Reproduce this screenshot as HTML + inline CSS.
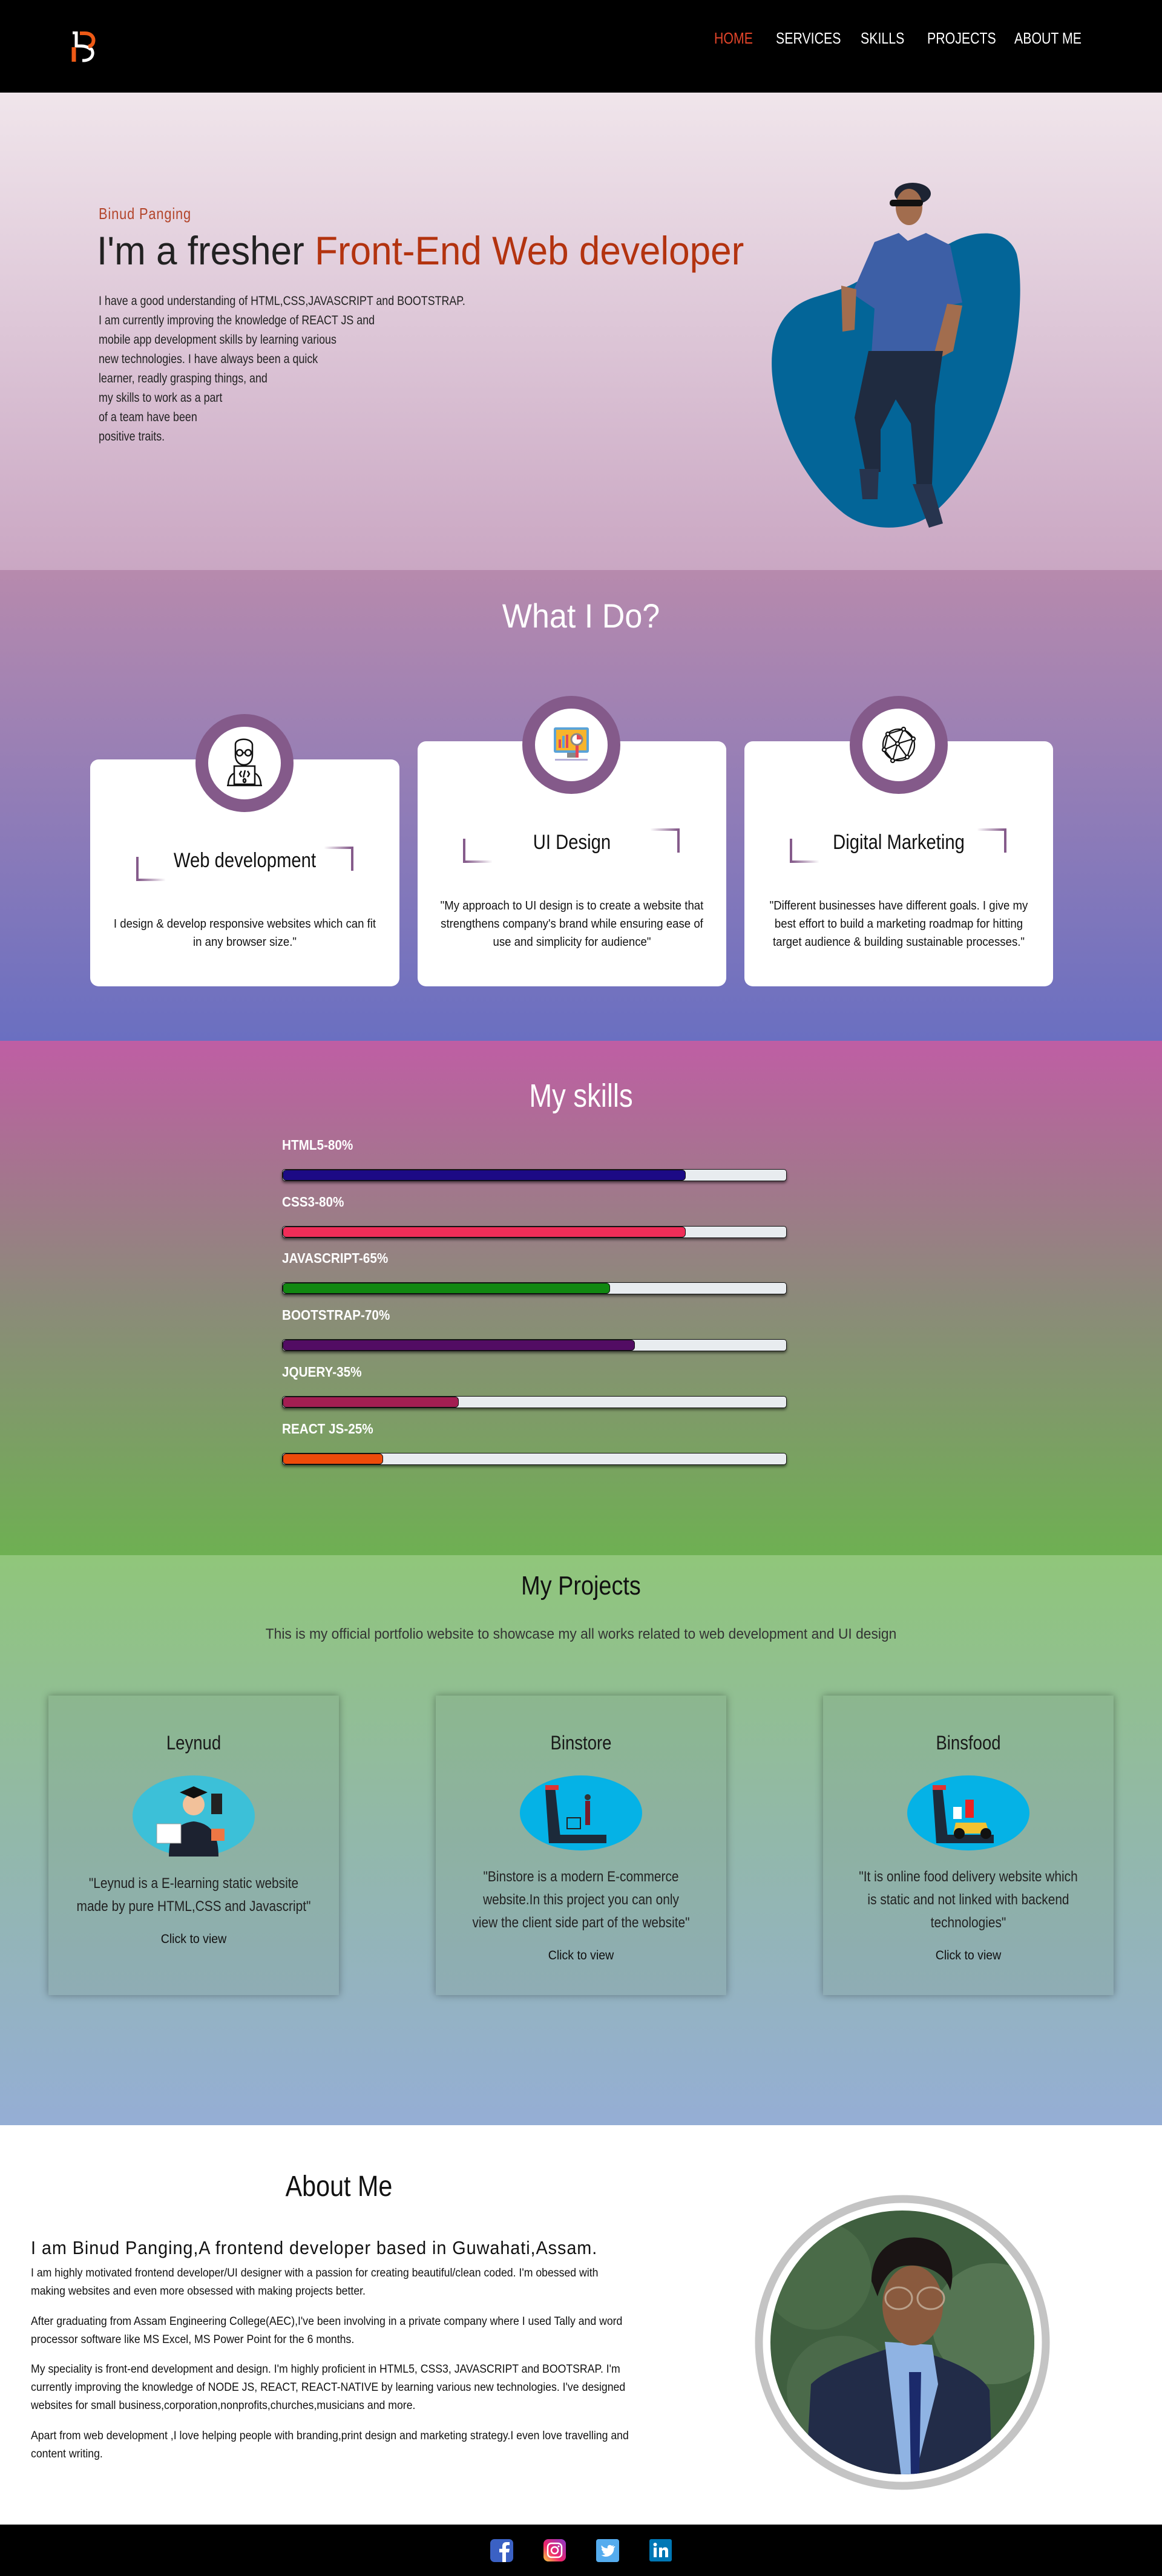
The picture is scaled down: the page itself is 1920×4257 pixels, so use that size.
<!DOCTYPE html>
<html><head><meta charset="utf-8">
<style>
*{margin:0;padding:0;box-sizing:border-box}
html,body{width:1920px;height:4257px;overflow:hidden}
body{position:relative;font-family:"Liberation Sans",sans-serif;color:#111}
.abs{position:absolute}
.n{transform:scaleX(.93);transform-origin:left top;white-space:nowrap}
.nc{transform:scaleX(.93);transform-origin:center top;white-space:nowrap}
.nav{left:0;top:0;width:1920px;height:153px;background:#000}
.nav a{position:absolute;top:48px;color:#fff;font-size:26px;text-decoration:none;white-space:nowrap;transform:scaleX(.82);transform-origin:left top}
.hero{left:0;top:153px;width:1920px;height:789px;background:linear-gradient(#f0e5eb,#caa7c3)}
.what{left:0;top:942px;width:1920px;height:778px;background:linear-gradient(#b78aad,#6a6fc1)}
.skills{left:0;top:1720px;width:1920px;height:850px;background:linear-gradient(#bf5ea4,#8c8a7a 50%,#6eb052)}
.proj{left:0;top:2570px;width:1920px;height:942px;background:linear-gradient(#90c67a,#92b9a6 45%,#95aed5)}
.about{left:0;top:3512px;width:1920px;height:660px;background:#fff}
.foot{left:0;top:4172px;width:1920px;height:85px;background:#000}
.card{background:#fff;border-radius:14px}
.circ{width:162px;height:162px;border-radius:50%;background:#fff;border:21px solid #845a8a;display:flex;align-items:center;justify-content:center}
.ctitle{font-size:34px;color:#111;text-align:center}
.cdesc{font-size:20px;line-height:30px;text-align:center;color:#111}
.brk{position:absolute;width:48px;height:40px}
.bl{border-left:4px solid #845a8a;border-bottom:4px solid #845a8a;border-image:linear-gradient(to right,#845a8a,#fff) 1}
.br{border-right:4px solid #845a8a;border-top:4px solid #845a8a;border-image:linear-gradient(to left,#845a8a,#fff) 1}
.lbl{left:466px;color:#fff;font-weight:bold;font-size:23px;transform:scaleX(.9);transform-origin:left top;white-space:nowrap}
.bar{left:466px;width:834px;height:20px;background:#e8ecef;border:1px solid #111;border-radius:5px;box-shadow:0 3px 4px rgba(0,0,0,.5);overflow:hidden}
.bar i{display:block;height:100%;border-radius:6px;border:1px solid #111}
.pc{width:480px;height:495px;background:rgba(120,150,130,.18);box-shadow:0 0 12px rgba(0,0,0,.35)}
.pt{font-size:32px;text-align:center;color:#1a1a1a}
.pd{font-size:24px;line-height:38px;text-align:center;color:#222;transform:scaleX(.87);transform-origin:center top;white-space:nowrap}
.pv{font-size:21px;text-align:center;color:#111}
.ap{left:51px;font-size:19px;line-height:30px;color:#111}
</style></head><body>

<div class="abs nav">
 <svg class="abs" style="left:116px;top:52px" width="50" height="52" viewBox="0 0 50 52">
  <path d="M4 2 h6 v22 h8 c6 0 12 2 16 6" fill="none" stroke="#fff" stroke-width="5"/>
  <path d="M6 26 v24" stroke="#ee5a16" stroke-width="7"/>
  <path d="M16 3 h8 c12 0 16 8 14 15 c-1 4-4 6-8 7" fill="none" stroke="#ee5a16" stroke-width="6"/>
  <path d="M34 28 c6 6 4 18-10 20 h-4" fill="none" stroke="#fff" stroke-width="5"/>
 </svg>
 <a style="left:1180px;color:#e3452a">HOME</a>
 <a style="left:1282px">SERVICES</a>
 <a style="left:1422px">SKILLS</a>
 <a style="left:1532px">PROJECTS</a>
 <a style="left:1676px">ABOUT ME</a>
</div>

<div class="abs hero"></div>
<div class="abs n" style="left:163px;top:338px;font-size:26px;color:#b3452b;letter-spacing:1px;transform:scaleX(.84)">Binud Panging</div>
<div class="abs n" style="left:160px;top:376px;font-size:66px;color:#222;transform:scaleX(.94)">I'm a fresher <span style="color:#b3330f">Front-End Web developer</span></div>
<div class="abs n" style="left:163px;top:482px;font-size:21px;line-height:32px;color:#222;transform:scaleX(.85)">I have a good understanding of HTML,CSS,JAVASCRIPT and BOOTSTRAP.<br>I am currently improving the knowledge of REACT JS and<br>mobile app development skills by learning various<br>new technologies. I have always been a quick<br>learner, readly grasping things, and<br>my skills to work as a part<br>of a team have been<br>positive traits.</div>

<svg class="abs" style="left:1240px;top:280px" width="480" height="620" viewBox="0 0 480 620">
 <path d="M330 122 C370 100 425 95 440 140 C452 190 444 280 425 350 C400 440 360 520 300 570 C260 600 190 600 150 565 C90 515 45 430 36 340 C30 270 55 225 110 210 C150 198 165 195 200 170 C250 150 290 140 330 122 Z" fill="#036598"/>
 <ellipse cx="268" cy="40" rx="30" ry="18" fill="#1d2433"/>
 <ellipse cx="262" cy="62" rx="22" ry="30" fill="#a26d4e"/>
 <rect x="230" y="50" width="55" height="11" rx="5" fill="#111"/>
 <path d="M205 120 L245 105 L260 118 L290 105 L330 125 L350 220 L325 225 L318 305 L200 305 L205 230 L168 205 Z" fill="#3d5fa6"/>
 <path d="M150 192 L175 198 L172 265 L152 268 Z" fill="#a26d4e"/>
 <path d="M325 222 L350 225 L335 300 L300 318 Z" fill="#a26d4e"/>
 <path d="M195 300 L318 300 L305 390 L300 520 L275 530 L265 420 L240 380 L215 430 L215 500 L190 500 L172 410 Z" fill="#1f2b40"/>
 <path d="M180 495 L212 495 L210 545 L185 545 Z" fill="#27344e"/>
 <path d="M268 520 L300 520 L318 585 L295 592 Z" fill="#27344e"/>
</svg>

<div class="abs what"></div>
<div class="abs nc" style="left:0;width:1920px;top:985px;text-align:center;font-size:56px;color:#fff">What I Do?</div>

<div class="abs card" style="left:149px;top:1255px;width:511px;height:375px"></div>
<div class="abs card" style="left:690px;top:1225px;width:510px;height:405px"></div>
<div class="abs card" style="left:1230px;top:1225px;width:510px;height:405px"></div>

<div class="abs circ" style="left:323px;top:1180px">
 <svg width="70" height="90" viewBox="0 0 70 90" fill="none" stroke="#111" stroke-width="2.5">
  <path d="M20 14 c0-10 25-12 28 0 v18 c0 10-6 16-14 16 c-8 0-14-6-14-16 Z"/>
  <circle cx="27" cy="28" r="5"/><circle cx="41" cy="28" r="5"/><path d="M32 28h4"/>
  <path d="M18 50 h34 v30 h-34 Z"/><path d="M8 82 c0-10 4-18 10-20 M62 82 c0-10-4-18-10-20 M6 82h58"/>
  <path d="M30 58 l-3 5 3 5 M40 58 l3 5-3 5 M36 57 l-3 12"/><ellipse cx="35" cy="74" rx="2" ry="3"/>
 </svg>
</div>
<div class="abs circ" style="left:863px;top:1150px">
 <svg width="70" height="70" viewBox="0 0 70 70">
  <rect x="6" y="6" width="58" height="42" rx="3" fill="#5aa3d8"/><rect x="10" y="10" width="50" height="34" fill="#f7b42c"/>
  <rect x="14" y="26" width="4" height="14" fill="#e0475a"/><rect x="20" y="20" width="4" height="20" fill="#5aa3d8"/><rect x="26" y="18" width="4" height="22" fill="#e0475a"/>
  <circle cx="44" cy="26" r="9" fill="#fff" stroke="#888" stroke-width="3"/><path d="M44 26 v-8 a8 8 0 0 1 8 8z" fill="#e0475a"/>
  <rect x="42" y="36" width="5" height="20" fill="#e0475a"/><rect x="28" y="48" width="14" height="8" fill="#888"/>
  <rect x="8" y="58" width="54" height="3" fill="#b5b0d8"/>
 </svg>
</div>
<div class="abs circ" style="left:1404px;top:1150px">
 <svg width="64" height="64" viewBox="0 0 64 64" fill="none" stroke="#111" stroke-width="2.2">
  <circle cx="32" cy="32" r="26"/><path d="M14 14 L40 6 L56 22 L46 52 L22 58 L8 40 Z M14 14 L30 30 L56 22 M30 30 L46 52 M30 30 L8 40 M40 6 L30 30 M30 30 L22 58"/>
  <g fill="#fff"><circle cx="14" cy="14" r="3"/><circle cx="40" cy="6" r="3"/><circle cx="56" cy="22" r="3"/><circle cx="46" cy="52" r="3"/><circle cx="22" cy="58" r="3"/><circle cx="8" cy="40" r="3"/><circle cx="30" cy="30" r="3"/></g>
 </svg>
</div>

<div class="abs ctitle nc" style="left:149px;width:511px;top:1403px;transform:scaleX(.86)">Web development</div>
<div class="abs brk bl" style="left:225px;top:1416px"></div>
<div class="abs brk br" style="left:536px;top:1399px"></div>
<div class="abs cdesc nc" style="left:149px;width:511px;top:1512px">I design &amp; develop responsive websites which can fit<br>in any browser size."</div>

<div class="abs ctitle nc" style="left:690px;width:510px;top:1373px;transform:scaleX(.86)">UI Design</div>
<div class="abs brk bl" style="left:765px;top:1386px"></div>
<div class="abs brk br" style="left:1075px;top:1369px"></div>
<div class="abs cdesc nc" style="left:690px;width:510px;top:1482px">"My approach to UI design is to create a website that<br>strengthens company's brand while ensuring ease of<br>use and simplicity for audience"</div>

<div class="abs ctitle nc" style="left:1230px;width:510px;top:1373px;transform:scaleX(.86)">Digital Marketing</div>
<div class="abs brk bl" style="left:1305px;top:1386px"></div>
<div class="abs brk br" style="left:1615px;top:1369px"></div>
<div class="abs cdesc nc" style="left:1230px;width:510px;top:1482px">"Different businesses have different goals. I give my<br>best effort to build a marketing roadmap for hitting<br>target audience &amp; building sustainable processes."</div>

<div class="abs skills"></div>
<div class="abs nc" style="left:0;width:1920px;top:1780px;text-align:center;font-size:54px;color:#fff;transform:scaleX(.84)">My skills</div>
<div class="abs lbl" style="top:1879px">HTML5-80%</div>
<div class="abs bar" style="top:1932px"><i style="width:80%;background:#1c0a85"></i></div>
<div class="abs lbl" style="top:1973px">CSS3-80%</div>
<div class="abs bar" style="top:2026px"><i style="width:80%;background:#f02d58"></i></div>
<div class="abs lbl" style="top:2066px">JAVASCRIPT-65%</div>
<div class="abs bar" style="top:2119px"><i style="width:65%;background:#118811"></i></div>
<div class="abs lbl" style="top:2160px">BOOTSTRAP-70%</div>
<div class="abs bar" style="top:2213px"><i style="width:70%;background:#520c63"></i></div>
<div class="abs lbl" style="top:2254px">JQUERY-35%</div>
<div class="abs bar" style="top:2307px"><i style="width:35%;background:#a31e52"></i></div>
<div class="abs lbl" style="top:2348px">REACT JS-25%</div>
<div class="abs bar" style="top:2401px"><i style="width:20%;background:#ee4b0a"></i></div>

<div class="abs proj"></div>
<div class="abs nc" style="left:0;width:1920px;top:2596px;text-align:center;font-size:44px;color:#111;transform:scaleX(.86)">My Projects</div>
<div class="abs nc" style="left:0;width:1920px;top:2687px;text-align:center;font-size:24px;color:#333;transform:scaleX(.95)">This is my official portfolio website to showcase my all works related to web development and UI design</div>

<div class="abs pc" style="left:80px;top:2802px"></div>
<div class="abs pc" style="left:720px;top:2802px"></div>
<div class="abs pc" style="left:1360px;top:2802px"></div>

<div class="abs pt nc" style="left:80px;width:480px;top:2862px;transform:scaleX(.86)">Leynud</div>
<svg class="abs" style="left:219px;top:2934px" width="202" height="134" viewBox="0 0 202 134">
 <ellipse cx="101" cy="67" rx="101" ry="67" fill="#3cc0d8"/>
 <path d="M60 134 c0-40 15-55 41-58 c26 3 41 18 41 58z" fill="#1c2230"/>
 <circle cx="101" cy="48" r="18" fill="#f2c19a"/><path d="M78 28 l23-10 23 10-23 10z" fill="#111"/>
 <rect x="40" y="80" width="40" height="32" fill="#fff" stroke="#999"/><rect x="130" y="30" width="18" height="34" fill="#222"/>
 <rect x="130" y="88" width="22" height="20" fill="#e74"/>
</svg>
<div class="abs pd" style="left:80px;width:480px;top:3094px">"Leynud is a E-learning static website<br>made by pure HTML,CSS and Javascript"</div>
<div class="abs pv nc" style="left:80px;width:480px;top:3193px">Click to view</div>

<div class="abs pt nc" style="left:720px;width:480px;top:2862px;transform:scaleX(.86)">Binstore</div>
<svg class="abs" style="left:859px;top:2934px" width="202" height="125" viewBox="0 0 202 125">
 <ellipse cx="101" cy="62" rx="101" ry="62" fill="#05b2e6"/>
 <path d="M42 22 l16 -4 10 94 h-20z" fill="#1c2a3a"/><rect x="42" y="16" width="22" height="8" fill="#d33"/>
 <rect x="48" y="98" width="95" height="14" fill="#1c2a3a"/>
 <rect x="78" y="70" width="22" height="18" fill="none" stroke="#222" stroke-width="2"/>
 <rect x="108" y="42" width="8" height="40" fill="#7a1b2a"/><circle cx="112" cy="36" r="5" fill="#333"/>
</svg>
<div class="abs pd" style="left:720px;width:480px;top:3083px">"Binstore is a modern E-commerce<br>website.In this project you can only<br>view the client side part of the website"</div>
<div class="abs pv nc" style="left:720px;width:480px;top:3220px">Click to view</div>

<div class="abs pt nc" style="left:1360px;width:480px;top:2862px;transform:scaleX(.86)">Binsfood</div>
<svg class="abs" style="left:1499px;top:2934px" width="202" height="125" viewBox="0 0 202 125">
 <ellipse cx="101" cy="62" rx="101" ry="62" fill="#05b2e6"/>
 <path d="M42 22 l16 -4 10 94 h-20z" fill="#1c2a3a"/><rect x="42" y="16" width="22" height="8" fill="#d33"/>
 <rect x="48" y="98" width="95" height="14" fill="#1c2a3a"/>
 <rect x="76" y="52" width="14" height="20" fill="#fff"/><path d="M96 40 h14 v30 h-14z" fill="#e22"/>
 <path d="M80 78 h50 l6 18 h-60z" fill="#f2c230"/><circle cx="86" cy="96" r="9" fill="#111"/><circle cx="130" cy="96" r="9" fill="#111"/>
</svg>
<div class="abs pd" style="left:1360px;width:480px;top:3083px">"It is online food delivery website which<br>is static and not linked with backend<br>technologies"</div>
<div class="abs pv nc" style="left:1360px;width:480px;top:3220px">Click to view</div>

<div class="abs about"></div>
<div class="abs nc" style="left:260px;width:600px;top:3586px;text-align:center;font-size:48px;color:#111;transform:scaleX(.86)">About Me</div>
<div class="abs n" style="left:51px;top:3697px;font-size:31px;letter-spacing:1px;color:#111">I am Binud Panging,A frontend developer based in Guwahati,Assam.</div>
<div class="abs ap n" style="top:3742px">I am highly motivated frontend developer/UI designer with a passion for creating beautiful/clean coded. I'm obessed with<br>making websites and even more obsessed with making projects better.</div>
<div class="abs ap n" style="top:3822px">After graduating from Assam Engineering College(AEC),I've been involving in a private company where I used Tally and word<br>processor software like MS Excel, MS Power Point for the 6 months.</div>
<div class="abs ap n" style="top:3901px">My speciality is front-end development and design. I'm highly proficient in HTML5, CSS3, JAVASCRIPT and BOOTSRAP. I'm<br>currently improving the knowledge of NODE JS, REACT, REACT-NATIVE by learning various new technologies. I've designed<br>websites for small business,corporation,nonprofits,churches,musicians and more.</div>
<div class="abs ap n" style="top:4011px">Apart from web development ,I love helping people with branding,print design and marketing strategy.I even love travelling and<br>content writing.</div>

<svg class="abs" style="left:1240px;top:3620px" width="500" height="500" viewBox="0 0 500 500">
 <defs><clipPath id="cp"><circle cx="251" cy="251" r="218"/></clipPath></defs>
 <circle cx="251" cy="251" r="237" fill="none" stroke="#c4c4c4" stroke-width="13"/>
 <g clip-path="url(#cp)">
  <rect width="500" height="500" fill="#3f5f3f"/>
  <circle cx="110" cy="140" r="90" fill="#4a6b48"/><circle cx="400" cy="220" r="100" fill="#557553"/><circle cx="150" cy="330" r="90" fill="#4b6a4a"/>
  <path d="M90 500 L100 320 C130 290 190 275 230 260 L280 265 C330 280 380 300 395 330 L400 500Z" fill="#222c48"/>
  <path d="M222 250 L300 255 L310 320 L270 480 L250 480 L230 320Z" fill="#8fb3e3"/>
  <path d="M262 300 h20 l-3 170 h-14z" fill="#1b2a6b"/>
  <ellipse cx="268" cy="190" rx="50" ry="66" fill="#8a5a3e"/>
  <path d="M200 150 C200 90 250 70 290 80 C330 90 340 130 330 165 C320 130 280 120 250 125 C225 130 215 160 210 175Z" fill="#1a1414"/>
  <g fill="none" stroke="#b9a08a" stroke-width="3"><ellipse cx="245" cy="178" rx="22" ry="18"/><ellipse cx="298" cy="178" rx="22" ry="18"/></g>
 </g>
</svg>

<div class="abs foot"></div>
<svg class="abs" style="left:810px;top:4196px" width="38" height="38" viewBox="0 0 38 38"><rect width="38" height="38" rx="7" fill="#3b61c4"/><path d="M26 38 V22 h5 l1-6 h-6 v-3 c0-2 1-3 3-3 h3 V5 h-5 c-5 0-7 3-7 7 v4 h-5 v6 h5 v16z" fill="#fff"/></svg>
<svg class="abs" style="left:898px;top:4196px" width="37" height="37" viewBox="0 0 37 37"><defs><linearGradient id="ig" x1="0" y1="1" x2="1" y2="0"><stop offset="0" stop-color="#fdd640"/><stop offset=".4" stop-color="#f0246a"/><stop offset="1" stop-color="#8a3ac9"/></linearGradient></defs><rect width="37" height="37" rx="8" fill="url(#ig)"/><rect x="7" y="7" width="23" height="23" rx="6" fill="none" stroke="#fff" stroke-width="2.5"/><circle cx="18.5" cy="18.5" r="5.5" fill="none" stroke="#fff" stroke-width="2.5"/><circle cx="25" cy="12" r="1.5" fill="#fff"/></svg>
<svg class="abs" style="left:985px;top:4196px" width="38" height="38" viewBox="0 0 38 38"><rect width="38" height="38" rx="4" fill="#55acee"/><path d="M30 12 c-1 .5-2 .7-3 .8 1-.6 2-1.6 2-2.8-1 .6-2 1-3 1.2-2-2-6-2-7 1-.5 1-.5 2 0 3-4 0-8-2-10-5-1 2 0 5 2 6-1 0-2-.3-2-.6 0 3 2 5 4 5.5-.8.2-1.6.2-2.2 0 .6 2 2.5 3.5 4.6 3.5-2 1.6-4.5 2.3-7 2 9 6 21 0 21-11v-1c1-.7 1.6-1.5 2.2-2.4z" fill="#fff"/></svg>
<svg class="abs" style="left:1073px;top:4196px" width="37" height="37" viewBox="0 0 37 37"><rect width="37" height="37" rx="3" fill="#0077b5"/><rect x="7" y="14" width="5" height="16" fill="#fff"/><circle cx="9.5" cy="9" r="3" fill="#fff"/><path d="M16 14 h5 v2.5 c1-2 3-3 5-3 4 0 5 3 5 6.5 V30 h-5 v-9 c0-2-.6-3-2.3-3 -2 0-2.7 1.4-2.7 3 v9 h-5z" fill="#fff"/></svg>

</body></html>
